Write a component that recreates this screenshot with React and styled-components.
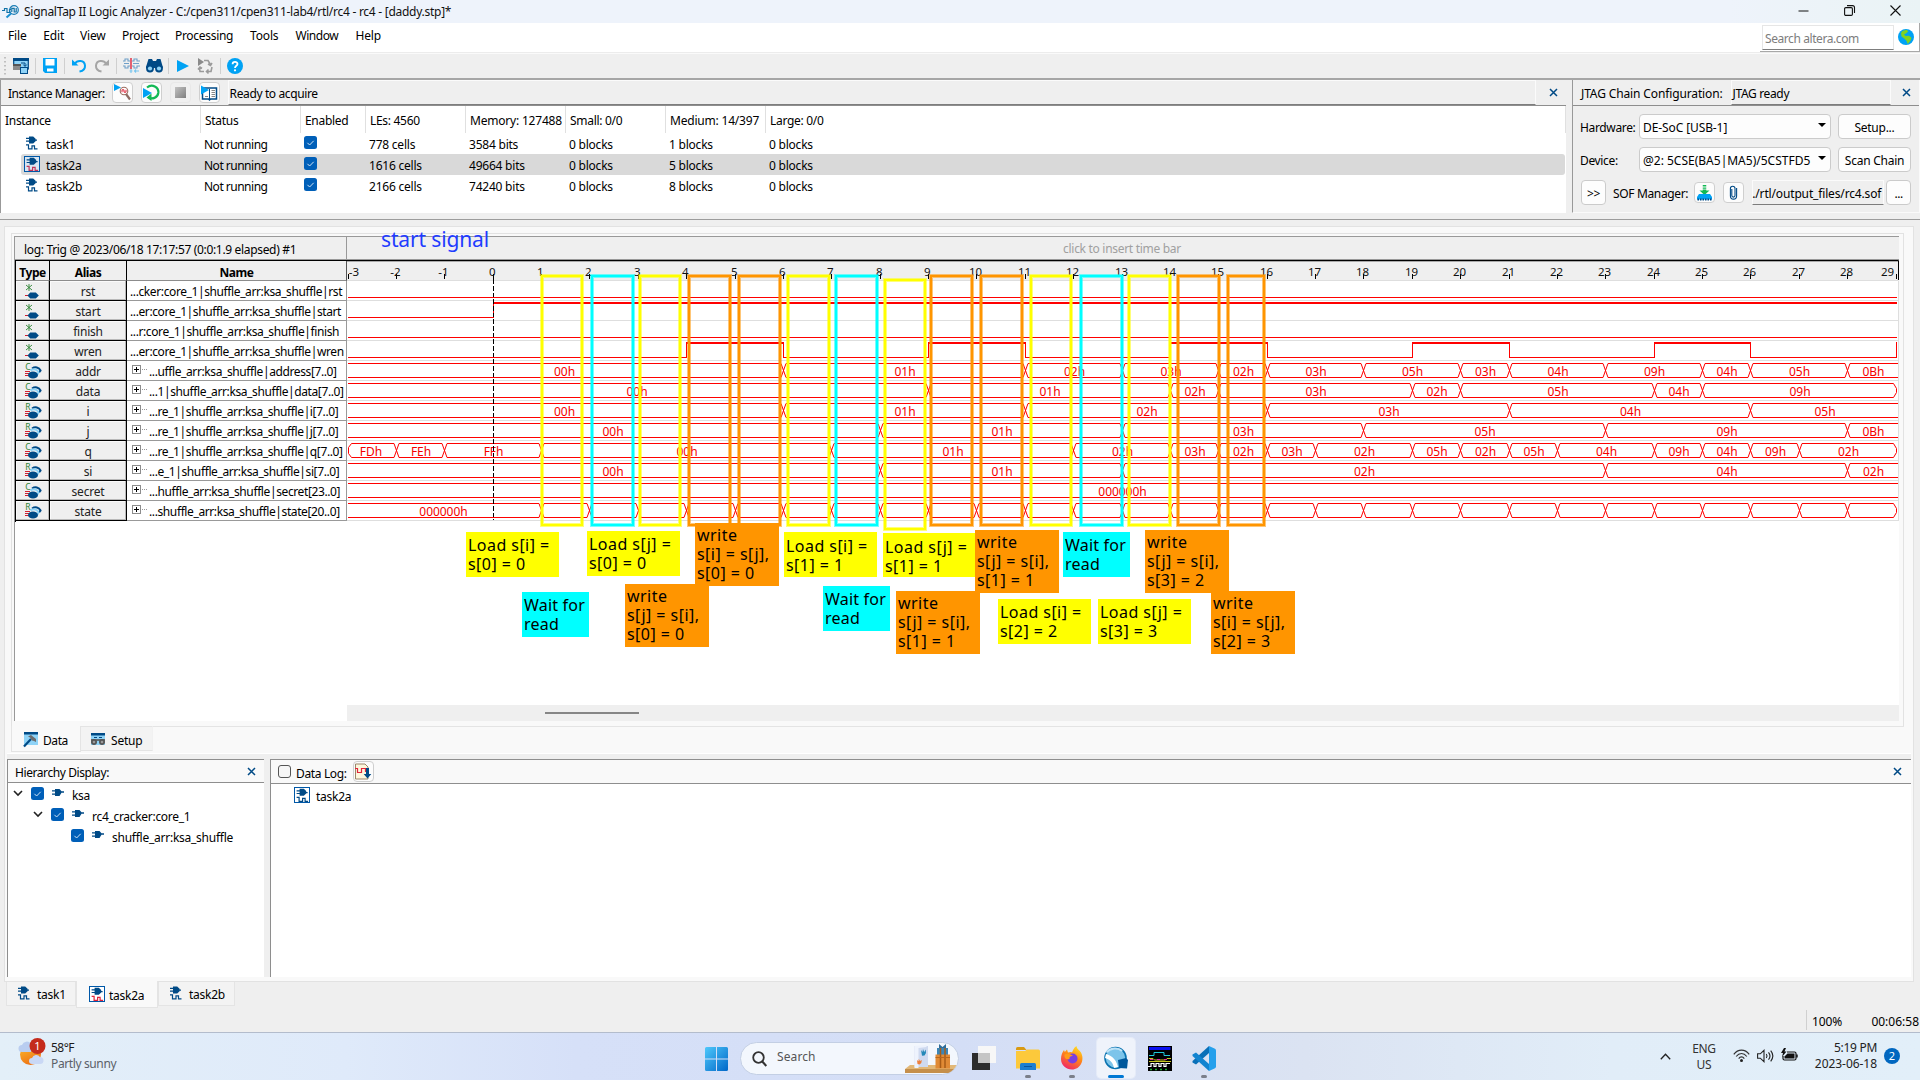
import React from 'react';
import styled, { createGlobalStyle } from 'styled-components';

const Global = createGlobalStyle`
  *, *::before, *::after { box-sizing: border-box; }
  html, body { margin: 0; padding: 0; background: #efefef; overflow: hidden; }
  svg { display: block; flex: none; overflow: visible; }
`;

const FONT = '"Noto Sans", "Open Sans", sans-serif';
const NAVY = '#004a86';
const SKY = '#00a2f4';

/* ---------- shell ---------- */
const Desktop = styled.div`
  position: relative;
  width: 1920px;
  height: 1080px;
  overflow: hidden;
  display: flex;
  flex-direction: column;
  background: #efefef;
  color: #000;
  font: 12px/16px ${FONT};
`;
const Text = styled.span`
  white-space: pre;
  letter-spacing: ${(p) => p.$ls ?? -0.35}px;
  color: ${(p) => p.$c || 'inherit'};
  margin-left: ${(p) => p.$ml || 0}px;
  margin-top: ${(p) => p.$mt || 0}px;
  flex: none;
`;
const Spacer = styled.div`flex: 1;`;

const TitleBar = styled.header`
  height: 23px;
  flex: none;
  display: flex;
  align-items: center;
  padding-left: 2px;
  background: linear-gradient(90deg, #eef3fb 0%, #eef3fb 90%, #eaf3f5 100%);
`;
const WindowButtons = styled.div`
  display: flex;
  align-items: center;
  gap: 35px;
  margin: -3px 19px 0 0;
`;
const MenuBar = styled.nav`
  height: 29px;
  flex: none;
  display: flex;
  background: #fff;
  padding-left: 8px;
`;
const MenuItem = styled.div`
  width: ${(p) => p.$w}px;
  padding-top: 5px;
  letter-spacing: ${(p) => p.$ls ?? -0.2}px;
`;
const SearchBox = styled.div`
  width: 160px;
  display: flex;
  align-items: flex-start;
  border-right: 1px solid #a8a8a8;
  border-bottom: 1px solid #a8a8a8;
  padding: 2px 0 0 2px;
  gap: 4px;
`;
const SearchField = styled.div`
  width: 132px;
  height: 25px;
  border: 1px solid #e6e6e6;
  border-bottom: 1px solid #7d7d7d;
  padding: 5px 0 0 2px;
`;
const ToolBar = styled.div`
  height: 28px;
  flex: none;
  display: flex;
  align-items: center;
  padding: 0 0 0 4px;
  border-top: 1px solid #ececec;
  border-bottom: 2px solid #a6a6a6;
  box-shadow: inset 0 1px 0 #fafafa;
`;
const ToolIcon = styled.div`
  margin-left: ${(p) => p.$gap}px;
  width: ${(p) => p.$w || 16}px;
  display: flex;
`;
const ToolSep = styled.div`
  width: 1px;
  height: 16px;
  margin-left: ${(p) => p.$gap}px;
  background: #cfcfcf;
`;

/* ---------- top docks ---------- */
const Docks = styled.section`
  height: 134px;
  flex: none;
  display: flex;
  gap: 6px;
  padding-bottom: 1px;
`;
const InstancePanel = styled.div`
  width: 1566px;
  display: flex;
  flex-direction: column;
  background: #fff;
  border-left: 1px solid #999;
`;
const JtagPanel = styled.div`
  flex: 1;
  display: flex;
  flex-direction: column;
  border-left: 1px solid #999;
  border-right: 1px solid #fafafa;
  border-bottom: 1px solid #fafafa;
`;
const DockHeader = styled.div`
  height: 26px;
  flex: none;
  display: flex;
  align-items: flex-start;
  background: #efefef;
  border-bottom: 1px solid #8e8e8e;
  padding-left: 7px;
`;
const IconButton = styled.div`
  width: 21px;
  height: 21px;
  margin: ${(p) => p.$mt ?? 2}px 0 0 ${(p) => p.$ml || 0}px;
  flex: none;
  display: flex;
  align-items: center;
  justify-content: center;
  background: ${(p) => (p.$off ? '#f0f0f0' : '#fcfcfc')};
  border: 1px solid ${(p) => (p.$off ? '#e8e8e8' : '#cfcfcf')};
  border-radius: 4px;
`;
const StatusField = styled.div`
  width: ${(p) => p.$w}px;
  height: ${(p) => p.$h || 25}px;
  margin-left: ${(p) => p.$ml}px;
  padding: ${(p) => p.$pt ?? 5}px 0 0 1px;
  border-top: 1px solid #fbfbfb;
  border-left: 1px solid #fbfbfb;
  border-right: 1px solid #fbfbfb;
  border-bottom: 1px solid #7d7d7d;
  white-space: nowrap;
`;
const CloseBox = styled.div`
  margin: ${(p) => p.$mt ?? 8}px ${(p) => p.$mr || 0}px 0 auto;
`;

const INST_COLS = '200px 100px 65px 100px 100px 100px 100px 800px';
const InstHead = styled.div`
  display: grid;
  grid-template-columns: ${INST_COLS};
  height: 27px;
`;
const InstHeadCell = styled.div`
  border-right: 1px solid #e0e0e0;
  padding: 7px 0 0 4px;
  letter-spacing: ${(p) => p.$ls ?? -0.3}px;
  white-space: nowrap;
`;
const InstRow = styled.div`
  display: grid;
  grid-template-columns: 179px 100px 65px 100px 100px 100px 100px 1fr;
  height: 21px;
  margin: 0 1px 0 20px;
  border-radius: 3px;
  background: ${(p) => (p.$on ? '#d9d9d9' : 'transparent')};
`;
const InstCell = styled.div`
  padding: ${(p) => (p.$icon ? 3 : 4)}px 0 0 ${(p) => (p.$first ? 3 : 4)}px;
  letter-spacing: -0.22px;
  white-space: nowrap;
  display: flex;
  gap: 6px;
`;

const JtagBody = styled.div`
  display: flex;
  flex-direction: column;
  gap: 8px;
  padding: 8px 7px 0 7px;
`;
const JtagRow = styled.div`
  height: 25px;
  display: flex;
  align-items: center;
`;
const JtagLabel = styled.div`
  width: 59px;
  padding-top: 2px;
  letter-spacing: -0.35px;
`;
const Select = styled.div`
  width: 192px;
  height: 25px;
  border: 1px solid #cbcbcb;
  border-radius: 4px;
  background: #fdfdfd;
  display: flex;
  align-items: center;
  padding: 2px 4px 0 3px;
  justify-content: space-between;
`;
const Arrow = styled.i`
  border: 4px solid transparent;
  border-top-color: #000;
  border-bottom: 0;
  margin-top: -5px;
`;
const PushButton = styled.div`
  width: ${(p) => p.$w}px;
  height: 25px;
  margin-left: ${(p) => p.$ml || 0}px;
  flex: none;
  display: flex;
  align-items: center;
  justify-content: center;
  padding-top: 2px;
  border: 1px solid #cbcbcb;
  border-radius: 4px;
  background: #fdfdfd;
`;

/* ---------- workspace ---------- */
const Divider = styled.div`
  height: 6px;
  flex: none;
  border-bottom: 1px solid #9c9c9c;
`;
const Workspace = styled.main`
  width: 1910px;
  height: 756px;
  flex: none;
  margin: 6px 0 0 4px;
  border: 1px solid #e2e2e2;
  background: #f9f9f9;
  display: flex;
  flex-direction: column;
`;
const LogPage = styled.div`
  width: 1893px;
  height: 493px;
  flex: none;
  margin: 6px 0 0 6px;
  border: 1px solid #e2e2e2;
  border-bottom: 0;
  background: #f9f9f9;
  padding: 2px 0 0 2px;
`;
const LogView = styled.div`
  width: 1885px;
  height: 485px;
  background: #fff;
  border-top: 1px solid #999;
  border-left: 1px solid #999;
  display: flex;
  flex-direction: column;
`;
const LogBar = styled.div`
  height: 23px;
  flex: none;
  display: flex;
  background: #efefef;
  border-bottom: 1px solid #999;
`;
const LogTitle = styled.div`
  width: 332px;
  border-right: 1px solid #999;
  padding: 5px 0 0 9px;
`;
const TimeBar = styled.div`
  flex: 1;
  padding: 4px 2px 0 0;
  text-align: center;
`;
const LogBody = styled.div`
  display: flex;
  height: 262px;
`;
const SignalTable = styled.div`
  width: 332px;
  flex: none;
  border-left: 1px solid #000;
  border-top: 1px solid #000;
  box-shadow: inset 0 1px 0 #999;
`;
const SignalRow = styled.div`
  display: grid;
  grid-template-columns: 34px 77px 1fr;
  height: 20px;
`;
const HeadCell = styled.div`
  background: #efefef;
  border-right: 1px solid ${(p) => (p.$last ? '#555' : '#000')};
  border-bottom: 1px solid #8c8c8c;
  padding-top: 4px;
  text-align: center;
  font-weight: 700;
  letter-spacing: -0.45px;
  font-size: 12px;
  line-height: 15px;
`;
const KeyCell = styled.div`
  background: #efefef;
  border-right: 1px solid #000;
  border-bottom: 1px solid #000;
  box-shadow: inset -1px -1px 0 #b8b8b8, inset 1px 1px 0 #fafafa;
  display: flex;
  justify-content: center;
  padding-top: 3px;
  line-height: 16px;
  color: #222;
  letter-spacing: -0.2px;
`;
const NameCell = styled.div`
  border-right: 1px solid #999;
  border-bottom: 1px solid #999;
  padding: 3px 0 0 ${(p) => (p.$bus ? 5 : 3)}px;
  display: flex;
  white-space: nowrap;
  letter-spacing: -0.39px;
`;
const Expander = styled.span`
  display: flex;
  margin: 1px 2px 0 0;
`;
const ScrollTrack = styled.div`
  height: 16px;
  margin: auto 0 0 332px;
  background: #efefef;
  padding: 7px 0 0 198px;
`;
const ScrollThumb = styled.div`
  width: 94px;
  height: 2px;
  background: #868686;
`;
const PageTabs = styled.div`
  height: 27px;
  flex: none;
  display: flex;
  align-items: flex-start;
  margin-left: 6px;
`;
const PageTab = styled.div`
  display: flex;
  width: ${(p) => p.$w}px;
  height: ${(p) => (p.$on ? 26 : 25)}px;
  padding: ${(p) => p.$pt}px 0 0 ${(p) => p.$pl}px;
  gap: ${(p) => p.$gap}px;
  background: ${(p) => (p.$on ? '#f9f9f9' : '#f3f3f3')};
  border: 1px solid #e4e4e4;
  border-top: ${(p) => (p.$on ? '0' : '1px solid #e4e4e4')};
  border-left: ${(p) => (p.$on ? '1px solid #e4e4e4' : '0')};
  border-right-color: ${(p) => (p.$on ? '#e4e4e4' : '#f1f1f1')};
`;
const TabRule = styled.div`
  width: 1751px;
  height: 1px;
  background: #e4e4e4;
`;
const LowerDocks = styled.div`
  flex: none;
  height: 224px;
  margin: 0 0 0 2px;
  padding-top: 5px;
  width: 1904px;
  background: #efefef;
  border-top: 1px solid #fff;
  display: flex;
  gap: 6px;
`;
const LowerPanel = styled.div`
  width: ${(p) => (p.$w ? p.$w + 'px' : 'auto')};
  flex: ${(p) => (p.$w ? 'none' : 1)};
  display: flex;
  flex-direction: column;
  background: #fff;
  border-left: 1px solid #8e8e8e;
  border-top: 1px solid #8e8e8e;
`;
const LowerHeader = styled.div`
  height: ${(p) => p.$h}px;
  flex: none;
  display: flex;
  align-items: flex-start;
  background: #f9f9f9;
  border-bottom: 1px solid #8e8e8e;
  padding-left: 7px;
`;
const TreeRow = styled.div`
  height: 21px;
  display: flex;
  align-items: center;
  padding-left: ${(p) => p.$pl}px;
`;
const Slot = styled.div`
  width: ${(p) => p.$w}px;
  flex: none;
  margin-top: ${(p) => p.$mt || 0}px;
`;
const EmptyCheck = styled.div`
  width: 13px;
  height: 13px;
  margin-top: 5px;
  border: 1px solid #555;
  border-radius: 3px;
  background: #f6f6f6;
`;

/* ---------- footer ---------- */
const FileTabs = styled.div`
  height: 27px;
  flex: none;
  display: flex;
  align-items: flex-start;
  padding-left: 6px;
  margin-top: -1px;
`;
const FileTab = styled.div`
  display: flex;
  width: ${(p) => p.$w}px;
  height: ${(p) => (p.$on ? 27 : 24)}px;
  margin-top: ${(p) => (p.$on ? 0 : 1)}px;
  padding: ${(p) => p.$pt}px 0 0 ${(p) => p.$pl}px;
  gap: ${(p) => (p.$on ? 4 : 5)}px;
  background: ${(p) => (p.$on ? '#f9f9f9' : '#f3f3f3')};
  border: 1px solid #e4e4e4;
  border-top: 0;
`;
const StatusBar = styled.div`
  flex: 1;
  display: flex;
  justify-content: flex-end;
  padding-top: 2px;
`;
const StatusCell = styled.div`
  width: 114px;
  height: 20px;
  padding: 4px 1px 0 5px;
  border-left: 1px solid #d0d0d0;
  display: flex;
  justify-content: space-between;
`;
const TaskBar = styled.footer`
  height: 48px;
  flex: none;
  display: grid;
  grid-template-columns: 705px 1fr auto;
  border-top: 1px solid #b3bccc;
  background: linear-gradient(90deg, #e3eff8 0%, #dfeafa 18%, #d6e0f8 30%, #d4def6 50%, #dbe3f2 68%, #e1edf8 84%, #e2eff9 100%);
`;
const Weather = styled.div`
  display: flex;
  padding: 5px 0 0 17px;
  gap: 6px;
`;
const Stack = styled.div`
  display: flex;
  flex-direction: column;
  text-align: ${(p) => p.$align || 'left'};
  padding-top: ${(p) => p.$pt || 0}px;
`;
const AppRow = styled.div`
  display: flex;
  align-items: flex-start;
`;
const SearchPill = styled.div`
  width: 219px;
  height: 33px;
  margin: 9px 0 0 12px;
  border-radius: 17px;
  border: 1px solid #c3cfe4;
  background: #f3f7fd;
  display: flex;
  align-items: center;
  padding-left: 11px;
  overflow: hidden;
`;
const AppTile = styled.div`
  width: 38px;
  height: 40px;
  margin-left: ${(p) => p.$ml}px;
  margin-top: 5px;
  padding-top: 8px;
  border-radius: 4px;
  background: ${(p) => (p.$on ? 'rgba(255,255,255,.6)' : 'transparent')};
  box-shadow: ${(p) => (p.$on ? '0 0 0 1px rgba(255,255,255,.35)' : 'none')};
  display: flex;
  flex-direction: column;
  align-items: center;
  justify-content: space-between;
`;
const Running = styled.i`
  width: ${(p) => (p.$on ? 16 : 6)}px;
  height: 3px;
  border-radius: 2px;
  background: ${(p) => (p.$none ? 'transparent' : p.$on ? '#0078d4' : '#7b7f8a')};
`;
const Tray = styled.div`
  display: flex;
  align-items: flex-start;
  padding-right: 20px;
`;
const TrayIcon = styled.div`
  margin: ${(p) => p.$mt}px 0 0 ${(p) => p.$ml}px;
`;
const Count = styled.div`
  width: 16px;
  height: 16px;
  margin: 15px 0 0 7px;
  border-radius: 8px;
  background: #0067c0;
  color: #fff;
  font-size: 11px;
  line-height: 16px;
  text-align: center;
`;

/* ---------- annotations ---------- */
const Highlight = styled.div`
  position: absolute;
  left: ${(p) => p.$x}px;
  top: ${(p) => p.$y}px;
  width: ${(p) => p.$w}px;
  height: ${(p) => p.$h}px;
  border: 2px solid ${(p) => p.$c};
  box-shadow: 0 0 0 1px ${(p) => p.$c}88, inset 0 0 0 1px ${(p) => p.$c}88;
`;
const Note = styled.div`
  position: absolute;
  left: ${(p) => p.$x}px;
  top: ${(p) => p.$y}px;
  width: ${(p) => p.$w}px;
  height: ${(p) => p.$h}px;
  padding: ${(p) => p.$pt}px 0 0 2px;
  background: ${(p) => p.$c};
  font: 16px/19px ${FONT};
  letter-spacing: ${(p) => p.$ls ?? 0.4}px;
  white-space: pre;
`;
const StartNote = styled.div`
  position: absolute;
  left: 381px;
  top: 227px;
  color: #1f3cff;
  font: 21px/25px ${FONT};
  letter-spacing: -0.15px;
  white-space: pre;
`;

/* ---------- icons ---------- */
const Check = () => (
  <svg width="13" height="13" viewBox="0 0 13 13">
    <rect width="13" height="13" rx="2.5" fill="#005fb8" />
    <path d="M3.4 6.8 5.6 9l4.1-4.2" fill="none" stroke="#cfe3f5" strokeWidth="1" />
  </svg>
);
const Cross = () => (
  <svg width="9" height="9" viewBox="0 0 9 9"><path d="M1 1l7 7M8 1L1 8" stroke={NAVY} strokeWidth="1.5" /></svg>
);
const plugShape = 'M5 1h4.2l2.4 2.3v.9h1.4v1.2h-1.4v.4L9.2 8H5V6.3H2V5.1h3V3.6H2V2.4h3z';
const PlugWave = ({ boxed, wave = NAVY, bg = '#fff' }) => (
  <svg width="16" height="16" viewBox="0 0 16 16">
    {boxed && <rect x=".5" y=".5" width="15" height="15" fill={bg} stroke="#0058a8" />}
    <g transform={boxed ? 'translate(.6 .8)' : 'translate(0 -.6)'}>
      <path d={plugShape} fill={NAVY} />
      <path d="M2 9.500h2.500v4H8v-3h2.500v3h3" fill="none" stroke={wave} strokeWidth="1.200" />
    </g>
  </svg>
);
const Plug = () => (
  <svg width="14" height="10" viewBox="0 0 14 10">
    <path d="M4 1h4.500l2 2.200H13v1.600h-2.500L8.500 8H4V6.700H1V5.500h3V3.500H1V2.300h3z" fill={NAVY} />
  </svg>
);
const Chevron = () => (
  <svg width="10" height="7" viewBox="0 0 10 7"><path d="M1 1l4 4 4-4" fill="none" stroke="#222" strokeWidth="1.6" /></svg>
);
const TapLogo = () => (
  <svg width="17" height="14" viewBox="0 0 17 14">
    <path d="M0 5.500h2.500v-2h2.500v4h2.500v-3h1.500M9.800 7V3.300h2.400V7h2V3" fill="none" stroke="#1173a8" strokeWidth="1.200" />
    <circle cx="12" cy="5" r="4.300" fill="none" stroke="#1a7db5" strokeWidth="1.200" />
    <path d="M9 8.500L4.500 12.500" stroke="#1a8fd0" strokeWidth="2" />
  </svg>
);
const TbLayers = () => (
  <svg width="16" height="16" viewBox="0 0 16 16">
    <rect x=".7" y="1" width="14.600" height="10" fill="#8fd3f7" stroke={NAVY} strokeWidth="1.200" />
    <rect x="0" y="0" width="16" height="3" fill={NAVY} />
    <rect x="0" y="6" width="8" height="6" fill="#8a8a8a" /><rect x="0" y="6" width="8" height="2" fill="#555" />
    <rect x="7.500" y="9.500" width="7" height="6" fill="#8fd3f7" stroke={NAVY} />
    <path d="M8 5h4v3M10.300 6.500L12 8.500l1.800-2" fill="none" stroke={NAVY} />
  </svg>
);
const TbSave = () => (
  <svg width="14" height="15" viewBox="0 0 14 15">
    <path d="M0 0h14v15H2l-2-2z" fill={SKY} /><rect x="2.500" y="1" width="9" height="6.500" fill="#fff" /><rect x="4" y="10.500" width="6.500" height="3" fill="#fff" />
  </svg>
);
const TbUndo = ({ c, flip }) => (
  <svg width="15" height="15" viewBox="0 0 15 15">
    <g transform={flip ? 'matrix(-1 0 0 1 15 0)' : undefined}>
      <path d="M0 1.500v6h6.500z" fill={c} />
      <path d="M3 5.500C5 2 12.500 1.500 13 7.500 13.200 10.500 11 13 7.500 13.600" fill="none" stroke={c} strokeWidth="2" />
    </g>
  </svg>
);
const TbTrigger = () => (
  <svg width="17" height="16" viewBox="0 0 17 16">
    <path d="M0 3h2V1h3v2h2M0 8h2v2h3V8h2M9 3h2V1h3v2h3M9 8h2v2h3V8h3M1 5.500h5M10 5.500h6" fill="none" stroke="#6f9fc8" strokeWidth="1.100" />
    <path d="M8 0v11" stroke="#e0243a" strokeWidth="1.400" />
    <path d="M8 11v4M6.500 13h3M16 13h-4M13 11.500L11.500 13l1.500 1.500" fill="none" stroke="#79c5ee" strokeWidth="1.100" />
  </svg>
);
const TbBinoc = () => (
  <svg width="17" height="15" viewBox="0 0 17 15">
    <path d="M2.500 1h3.500l1 2h3l1-2h3.500l2.300 8v1H0V9z" fill={NAVY} />
    <circle cx="4" cy="10.500" r="3.900" fill={NAVY} /><circle cx="13" cy="10.500" r="3.900" fill={NAVY} />
    <circle cx="4" cy="10.500" r="2.100" fill="#8fd3f7" /><circle cx="13" cy="10.500" r="2.100" fill="#8fd3f7" />
  </svg>
);
const TbPlay = () => (<svg width="12" height="12" viewBox="0 0 12 12"><path d="M0 0l12 6-12 6z" fill={SKY} /></svg>);
const TbRecycle = () => (
  <svg width="17" height="16" viewBox="0 0 17 16">
    <path d="M1 0v8l6-4z" fill="#8a8a8a" />
    <path d="M7 2.500h4l2.500 4M15 5l-1.500 2.500L11 6M15 9l-1 4.500h-4M11.500 11.500L9.500 13.500l2 2M7 13.500H3L2.500 10M1 11.500L3 9l2 1.500" fill="none" stroke="#9a9a9a" strokeWidth="1.600" />
  </svg>
);
const TbHelp = () => (
  <svg width="16" height="16" viewBox="0 0 16 16">
    <circle cx="8" cy="8" r="8" fill={SKY} />
    <path d="M5.600 6.200C5.600 3.200 10.500 3.200 10.500 6 10.500 7.800 8 7.800 8 10" fill="none" stroke="#fff" strokeWidth="1.800" />
    <circle cx="8" cy="12.300" r="1.100" fill="#fff" />
  </svg>
);
const ImRun = () => (
  <svg width="17" height="17" viewBox="0 0 17 17">
    <circle cx="10" cy="7" r="3.800" fill="#fff" stroke="#9b6b5e" strokeWidth="1.100" />
    <path d="M8 8.300V5.800h2v2.400h2V5.800" fill="none" stroke="#e0243a" strokeWidth="1" />
    <path d="M12 10l4 5.500" stroke="#8d6b63" strokeWidth="2.200" />
    <path d="M0 0l7 3.500L0 7z" fill={SKY} />
  </svg>
);
const ImLoop = () => (
  <svg width="17" height="17" viewBox="0 0 17 17">
    <path d="M4 3.500C9-.5 16 3 15.300 9 14.500 14 9 15.500 6 13.500" fill="none" stroke="#12b955" strokeWidth="2.200" />
    <path d="M8.500 9.500l-5 4 5 3.500z" fill="#12b955" />
    <path d="M0 4l9 5-9 5z" fill={SKY} />
  </svg>
);
const ImStop = () => (
  <svg width="13" height="13" viewBox="0 0 13 13">
    <defs><linearGradient id="stopg" x1="0" y1="0" x2="1" y2="1"><stop offset="0" stopColor="#c2c2c2" /><stop offset="1" stopColor="#7e7e7e" /></linearGradient></defs>
    <rect x="1" y="1" width="11" height="11" fill="url(#stopg)" />
  </svg>
);
const ImBook = () => (
  <svg width="17" height="16" viewBox="0 0 17 16">
    <path d="M2 3h13.500v11H9.500l-1 1-1-1H1.500V8" fill="#fff" stroke={NAVY} strokeWidth="1.500" />
    <path d="M8.500 4v10" stroke={NAVY} /><path d="M10.500 5.500h3.500M10.500 7.500h3.500M10.500 9.500h3.500M10.500 11.500h3.500M4 11.500h3" stroke="#888" />
    <path d="M0 .5l8 4.500-8 4.500z" fill={SKY} />
  </svg>
);
const ChipIcon = () => (
  <svg width="17" height="17" viewBox="0 0 17 17">
    <path d="M8.500 1v1.500M8.500 3.500v1.200M8.500 5.500v2" stroke="#12b955" strokeWidth="3.500" />
    <path d="M3.500 6.500h10l-5 4.500z" fill="#12b955" />
    <path d="M3 10h11l2 3v2.500H1V13z" fill={SKY} /><path d="M1.500 15.500h14" stroke={NAVY} strokeWidth="2" strokeDasharray="1.500 1" />
  </svg>
);
const ClipIcon = () => (
  <svg width="9" height="15" viewBox="0 0 9 15">
    <path d="M2.800 4v6.500a1.600 1.600 0 0 0 3.200 0V3.500a2 2 0 0 0-4.600 0v7.500a3.100 3.100 0 0 0 6.200 0V3" fill="none" stroke={NAVY} strokeWidth="1.100" />
  </svg>
);
const Globe = () => (
  <svg width="16" height="16" viewBox="0 0 16 16">
    <circle cx="8" cy="8" r="8" fill={SKY} />
    <path d="M4.500 2l4-1.300 1.800 1.500-2 2-2.300 1.400L7.500 7 11 6.800l2.500 2-1 3-2.700 3.300-1.500-3.500L6.200 9.400 3.500 7.500 3 4z" fill="#7fd321" />
  </svg>
);
const DataIcon = () => (
  <svg width="16" height="16" viewBox="0 0 16 16">
    <rect x="1" y="0" width="14" height="13" fill="#8fd3f7" /><rect x="1" y="0" width="14" height="2.500" fill={NAVY} />
    <path d="M1 14.500L8 7" stroke={NAVY} strokeWidth="2.200" /><path d="M5 4.500l3-1.500 5 4v3l-2-1-2-.5-2-3z" fill="#6d6d6d" />
  </svg>
);
const SetupIcon = () => (
  <svg width="16" height="13" viewBox="0 0 16 13">
    <rect x="1" y="0" width="14" height="12" fill="#8fd3f7" /><rect x="1" y="0" width="14" height="2.500" fill={NAVY} />
    <path d="M4 4.500h3M9 4.500h3" stroke={NAVY} /><path d="M1 7h14" stroke="#555" strokeWidth="1.600" />
    <circle cx="4" cy="9" r="3" fill="#555" /><circle cx="12" cy="9" r="3" fill="#555" /><circle cx="4" cy="9" r="1.300" fill="#999" /><circle cx="12" cy="9" r="1.300" fill="#999" />
  </svg>
);
const LogIcon = () => (
  <svg width="18" height="17" viewBox="0 0 18 17">
    <path d="M1.500 1h9.500l3 3v12h-12.500z" fill="#fdf6dc" stroke="#9a8568" />
    <path d="M1 5.500h2.500v4h4v-4h4v3.500" fill="none" stroke="#e0243a" strokeWidth="1.200" />
    <path d="M12 5h3v6h2.300l-3.800 4.500L9.700 11H12z" fill={NAVY} />
  </svg>
);
const NodeType = () => (
  <svg width="18" height="16" viewBox="0 0 18 16">
    <path d="M5 0v7M2 1l6 5M8 1L2 6" stroke="#2c8434" strokeWidth=".9" />
    <path d="M1 11.500h4" stroke="#d02030" /><path d="M3.500 11.500l2.700-3h5.600l3 3-3 3H6.200z" fill={NAVY} />
  </svg>
);
const BusType = ({ letter }) => (
  <svg width="18" height="16" viewBox="0 1 18 16">
    <path d="M1 8.500h5M1 10.500h4M1 12.500h5" stroke="#d02030" />
    <path d="M8 5.500c3-2 7-1.500 8.500 2l-1.500 2" fill="none" stroke={NAVY} strokeWidth="2" />
    <path d="M6.500 7.500c3-2 7-1.500 8 2l-1 2" fill="none" stroke="#8fd3f7" strokeWidth="2" />
    <ellipse cx="9" cy="12" rx="5" ry="3.600" fill={NAVY} />
    <text x="1.300" y="6.800" fontSize="8.500" fontFamily="Noto Sans" fill="#2c8434">{letter}</text>
  </svg>
);
const Plus = () => (
  <svg width="15" height="10" viewBox="0 0 15 10">
    <rect x=".5" y=".5" width="8" height="8" fill="#fff" stroke="#8c8c8c" /><path d="M2 4.500h5M4.500 2v5" stroke="#000" />
    <path d="M10 4.500h5" stroke="#999" strokeDasharray="1 1" />
  </svg>
);
const WinLogo = () => (
  <svg width="23" height="24" viewBox="0 0 23 24">
    <defs><linearGradient id="wg" x1="0" y1="0" x2="1" y2="1"><stop offset="0" stopColor="#4fc8fb" /><stop offset="1" stopColor="#0067c8" /></linearGradient></defs>
    <path d="M0 1.500Q0 0 1.500 0H11v11.500H0zM12 0h9.500Q23 0 23 1.500v10H12zM0 12.500h11V24H1.500Q0 24 0 22.500zM12 12.500h11v10Q23 24 21.500 24H12z" fill="url(#wg)" />
  </svg>
);
const Promo = () => (
  <svg width="53" height="29" viewBox="0 0 53 29">
    <path d="M5 21h48v4H0z" fill="#e2b878" /><path d="M0 25h53v4H0z" fill="#c58f4b" />
    <path d="M9.500 2h13.500v21H9.500z" fill="#cfdaf0" /><path d="M9.500 2l12-1v2l-8 1v20H9.500z" fill="#eef3fd" />
    <path d="M16 6l1.500 2 .5-3 1.200 3 1.500-2.500.3 3.500-1.500 2.500-2.500.2z" fill="#2489b8" />
    <path d="M12 16l1.500 1.200.3-2.500 1.200 2.300 1.800-1-.5 3-1.800 1.500-2-.5z" fill="#ee7f3c" />
    <path d="M32 4h11v7H32z" fill="#3a86b8" /><path d="M34 0l3.500 3L41 0v4h-7z" fill="#2f6d9a" /><path d="M30.500 10.500h14.500v14H30.500z" fill="#e08a35" /><path d="M35.500 4v20M40 4v20" stroke="#a75b17" strokeWidth="1.500" /><path d="M30.500 13.500h14.500" stroke="#b8661c" />
  </svg>
);
const TaskView = () => (
  <svg width="24" height="25" viewBox="0 0 24 25">
    <rect x="0" y="7" width="18" height="17" fill="#2c2c2c" /><rect x="6" y="0" width="18" height="17" fill="#f7f7f7" /><rect x="6" y="7" width="12" height="10" fill="#c5c5c5" />
  </svg>
);
const Folder = () => (
  <svg width="24" height="24" viewBox="0 0 24 24">
    <path d="M0 2.500Q0 1 1.500 1H8l2.500 3H0z" fill="#d99a12" /><path d="M0 5h9l2-1.500h11.500Q24 3.500 24 5v17.500H0z" fill="#fcc93b" />
    <path d="M4 18.500Q4 17 5.500 17h13q1.500 0 1.500 1.500V24H4z" fill="#1d7fd0" /><path d="M8 20.500h8" stroke="#0a559c" />
  </svg>
);
const Firefox = () => (
  <svg width="24" height="24" viewBox="0 0 24 24">
    <defs><linearGradient id="ff" x1=".8" y1="0" x2=".3" y2="1"><stop offset="0" stopColor="#ffe226" /><stop offset=".45" stopColor="#ff8a16" /><stop offset="1" stopColor="#f0246a" /></linearGradient></defs>
    <path d="M1 13C1 9 2.500 6 4 4l.8 2L7 3.500 8 6.500c2-1 4-.5 4 0 1-2.500 2-5 4.500-6.500.2 3 3 4 4.500 6.500 4 7.500-.5 17-9 17C6 23.500 1 19 1 13z" fill="url(#ff)" />
    <circle cx="12.500" cy="12.500" r="5" fill="#7a3fe0" /><path d="M4.500 8.500c3-1.500 6 0 8.500 1.200-3 .3-3.800 1.500-3.500 3.300C6 14 4 12 4.500 8.500z" fill="#ff9a1a" />
  </svg>
);
const Quartus = () => (
  <svg width="24" height="24" viewBox="0 0 24 24">
    <circle cx="11.500" cy="12" r="10.500" fill="#7cc4ea" stroke="#0a73b0" strokeWidth="1.600" />
    <path d="M2 8c4 1 10 4 12 13l-4 1C9 16 5 13 1 12z" fill="#fff" /><path d="M2.500 6.500C6 2 14 1 18 5" fill="none" stroke="#bfe3f7" strokeWidth="2" />
    <path d="M14 14l8-2 2 2-1 8.500-8-.5z" fill="#00589c" />
  </svg>
);
const WaveApp = () => (
  <svg width="24" height="25" viewBox="0 0 24 25">
    <rect width="24" height="25" fill="#000" /><rect x="1" y="1" width="21.500" height="3" fill="#0a10f0" />
    <path d="M1 9.500h5v-3h10v3h6" fill="none" stroke="#20c8d8" /><path d="M1 12.500h4l1.500 1.500h11l1.500-1.500h4M1 15.500h22" fill="none" stroke="#c8c820" /><path d="M2 13.500h20" stroke="#e030a0" strokeDasharray="3 4" />
    <path d="M0 20.500h3v-3h3v3h2v-3h3v3h2v-3h3v3h2v-3h4" fill="none" stroke="#fff" strokeWidth="1.200" /><path d="M2 23.500h20" stroke="#20b030" strokeWidth="1.600" strokeDasharray="2 3" />
  </svg>
);
const VsCode = () => (
  <svg width="24" height="25" viewBox="0 0 24 25">
    <path d="M17 0l6 2.800Q24 3.300 24 4.500v16q0 1.200-1 1.700L17 25z" fill="#25a0ec" />
    <path d="M17 0v7L4 18.500l-3.500-2v-1.500z" fill="#0a70b8" /><path d="M17 25v-7L4 6.500l-3.500 2V10z" fill="#1284d0" />
  </svg>
);
const WeatherIcon = () => (
  <svg width="28" height="28" viewBox="0 0 28 28">
    <defs><linearGradient id="sun" x1="0" y1="0" x2=".4" y2="1"><stop offset="0" stopColor="#fdc02f" /><stop offset="1" stopColor="#ee7414" /></linearGradient></defs>
    <circle cx="13.500" cy="16.500" r="10.500" fill="url(#sun)" />
    <path d="M5 14a3.500 3.500 0 0 1 0-7 5 5 0 0 1 9-1v8z" fill="#b9cdf0" />
    <path d="M15 26a3 3 0 0 1 0-6 4.500 4.500 0 0 1 8-1 3.500 3.500 0 0 1 0 7z" fill="#c9d8f5" />
    <circle cx="20.500" cy="8" r="8" fill="#c42b1c" />
    <text x="20.500" y="12" fontSize="11" fontFamily="Noto Sans" fill="#fff" textAnchor="middle">1</text>
  </svg>
);

/* ---------- waveform data ---------- */
const X0 = 348;
const STEP = 48.375;
const END = 1898;
const tx = (k) => Math.floor(X0 + STEP * (k + 3));

const N = 'node';
const SIGNALS = [
  { t: N, alias: 'rst', name: '...cker:core_1|shuffle_arr:ksa_shuffle|rst', high: [] },
  { t: N, alias: 'start', name: '...er:core_1|shuffle_arr:ksa_shuffle|start', high: [[0, 29]], rise: [0] },
  { t: N, alias: 'finish', name: '...r:core_1|shuffle_arr:ksa_shuffle|finish', high: [] },
  { t: N, alias: 'wren', name: '...er:core_1|shuffle_arr:ksa_shuffle|wren', high: [[4, 6], [9, 11], [14, 16], [19, 21], [24, 26]], rise: [4, 6, 9, 11, 14, 16, 19, 21, 24, 26, 29] },
  { t: 'C', alias: 'addr', name: '...uffle_arr:ksa_shuffle|address[7..0]', at: [6, 11, 13, 15, 16, 18, 20, 21, 23, 25, 26, 28], v: '00 01 02 03 02 03 05 03 04 09 04 05 0B' },
  { t: 'C', alias: 'data', name: '...1|shuffle_arr:ksa_shuffle|data[7..0]', at: [9, 14, 15, 19, 20, 24, 25, 29], v: '00 01 02 03 02 05 04 09' },
  { t: 'R', alias: 'i', name: '...re_1|shuffle_arr:ksa_shuffle|i[7..0]', at: [6, 11, 16, 21, 26], v: '00 01 02 03 04 05' },
  { t: 'R', alias: 'j', name: '...re_1|shuffle_arr:ksa_shuffle|j[7..0]', at: [8, 13, 18, 23, 28], v: '00 01 03 05 09 0B' },
  { t: 'C', alias: 'q', name: '...re_1|shuffle_arr:ksa_shuffle|q[7..0]', open: true, at: [-2, -1, 1, 7, 12, 14, 15, 16, 17, 19, 20, 21, 22, 24, 25, 26, 27, 29], v: 'FD FE FF 00 01 02 03 02 03 02 05 02 05 04 09 04 09 02' },
  { t: 'R', alias: 'si', name: '...e_1|shuffle_arr:ksa_shuffle|si[7..0]', at: [8, 13, 23, 28], v: '00 01 02 04 02' },
  { t: 'C', alias: 'secret', name: '...huffle_arr:ksa_shuffle|secret[23..0]', at: [], v: '000000' },
  { t: 'R', alias: 'state', name: '...shuffle_arr:ksa_shuffle|state[20..0]', at: Array.from({ length: 29 }, (_, n) => n + 1), v: '000000' },
];

function digitalPath(s, y) {
  const lo = y + 17.5;
  const out = [];
  let x = X0;
  s.high.forEach(([a, b]) => {
    out.push(`M${x} ${lo}H${tx(a)}`);
    x = tx(b);
  });
  if (x < 1890) out.push(`M${x} ${lo}H1897`);
  (s.rise || []).forEach((k) => out.push(`M${tx(k) + 0.5} ${y + 2}V${y + 18}`));
  return out.join('');
}

function busPath(s, y) {
  const t = y + 3.5;
  const b = y + 17.5;
  const m = y + 10.5;
  let out = '';
  let x = s.open ? X0 + 3.5 : X0;
  if (s.open) out += `M${X0 + 3.5} ${t}L${X0 + 0.5} ${m - 3}V${m + 3}L${X0 + 3.5} ${b}`;
  s.at.forEach((k) => {
    const c = tx(k) + 0.5;
    if (k < 29) {
      out += `M${x} ${t}H${c - 2.5}L${c + 2.5} ${b}M${x} ${b}H${c - 2.5}L${c + 2.5} ${t}`;
    } else {
      out += `M${x} ${t}H${c - 3}L${c} ${m - 2}V${m + 2}L${c - 3} ${b}H${x}`;
    }
    x = c + 2.5;
  });
  if (x < 1890) out += `M${x} ${t}H${END}M${x} ${b}H${END}`;
  return out;
}

function Wave() {
  return (
    <svg width="1552" height="262" viewBox="347 260 1552 262" fontFamily='"Noto Sans", sans-serif' fontSize="12">
      <rect x="347" y="260" width="1552" height="20" fill="#efefef" />
      <path d="M347 260.5H1898.5V280" fill="none" stroke="#000" />
      <path d="M347 261.5H1898" stroke="#aaa" />
      {Array.from({ length: 13 }, (_, r) => (
        <path key={r} d={`M347 ${280.5 + r * 20}H1898.5`} stroke="#dedede" />
      ))}
      <path d="M1898.5 281V521" stroke="#dedede" />
      {Array.from({ length: 33 }, (_, n) => {
        const k = n - 3;
        const x = tx(k);
        const cx = k === -3 ? 354 : k === 29 ? 1887.5 : x - (k >= 10 || k < 0 ? 0.5 : 0.8);
        return (
          <g key={k}>
            <path d={`M${x + 0.5} 274V279`} stroke="#000" shapeRendering="crispEdges" />
            <text x={cx} y="275.500" fontSize="11.500" textAnchor="middle" fill="#111">{k}</text>
          </g>
        );
      })}
      {SIGNALS.map((s, r) => {
        const y = 280 + r * 20;
        if (s.t === N) {
          return (
            <g key={r}>
              <path d={digitalPath(s, y)} fill="none" stroke="#f00" />
              {s.high.map(([a, b]) => <path key={a} d={`M${tx(a)} ${y + 3}H${b === 29 ? 1897 : tx(b) + 1}`} stroke="#f00" strokeWidth="2" />)}
            </g>
          );
        }
        const edges = [s.open || s.at.length ? X0 - 1 : X0, ...s.at.map(tx), END];
        return (
          <g key={r}>
            <path d={busPath(s, y)} fill="none" stroke="#f00" />
            {s.v.split(' ').map((v, n) => (
              <text key={n} x={(edges[n] + edges[n + 1]) / 2 + (n ? 1 : -0.5)} y={y + 16} textAnchor="middle" fill="#f40000" letterSpacing="-.05">{v}h</text>
            ))}
          </g>
        );
      })}
      <path d="M493.500 279V520" stroke="#000" strokeDasharray="5 2 5 2 4 2" />
    </svg>
  );
}

const Y = '#ffff00';
const C = '#00ffff';
const O = '#ff9500';
const HIGHLIGHTS = [
  [541, 42, Y], [591, 43, C], [639, 42, Y], [688, 43, O], [738, 43, O], [787, 43, Y], [835, 43, C],
  [884, 42, Y, 279, 251], [930, 43, O], [980, 43, O], [1030, 42, Y], [1080, 43, C], [1128, 43, Y], [1177, 43, O], [1227, 38, O],
];
const NOTES = [
  [466, 532, 93, 45, Y, 'Load s[i] =\ns[0] = 0', 3],
  [522, 592, 67, 45, C, 'Wait for\nread', 3],
  [587, 531, 93, 45, Y, 'Load s[j] =\ns[0] = 0', 3],
  [625, 584, 84, 63, O, 'write\ns[j] = s[i],\ns[0] = 0', 2],
  [695, 523, 84, 63, O, 'write\ns[i] = s[j],\ns[0] = 0', 2],
  [784, 532, 93, 45, Y, 'Load s[i] =\ns[1] = 1', 4],
  [823, 586, 67, 45, C, 'Wait for\nread', 3],
  [883, 533, 93, 44, Y, 'Load s[j] =\ns[1] = 1', 4],
  [896, 591, 84, 63, O, 'write\ns[j] = s[i],\ns[1] = 1', 2],
  [975, 530, 84, 63, O, 'write\ns[j] = s[i],\ns[1] = 1', 2],
  [998, 599, 93, 45, Y, 'Load s[i] =\ns[2] = 2', 3],
  [1063, 532, 67, 45, C, 'Wait for\nread', 3],
  [1098, 599, 93, 45, Y, 'Load s[j] =\ns[3] = 3', 3],
  [1145, 530, 84, 63, O, 'write\ns[j] = s[i],\ns[3] = 2', 2],
  [1211, 591, 84, 63, O, 'write\ns[i] = s[j],\ns[2] = 3', 2],
];
const INSTANCES = [
  ['task1', '778 cells', '3584 bits', '1 blocks'],
  ['task2a', '1616 cells', '49664 bits', '5 blocks'],
  ['task2b', '2166 cells', '74240 bits', '8 blocks'],
];

export default function App() {
  return (
    <Desktop>
      <Global />
      <TitleBar>
        <TapLogo />
        <Text $ml={5} $ls={-0.27} $c="#111">SignalTap II Logic Analyzer - C:/cpen311/cpen311-lab4/rtl/rc4 - rc4 - [daddy.stp]*</Text>
        <Spacer />
        <WindowButtons>
          <svg width="11" height="11" viewBox="0 0 11 11"><path d="M.5 6h10" stroke="#111" /></svg>
          <svg width="11" height="11" viewBox="0 0 11 11"><rect x=".6" y="2.600" width="7.800" height="7.800" rx="1.200" fill="none" stroke="#111" strokeWidth="1.100" /><path d="M3 .6h5.500q2 0 2 2V8" fill="none" stroke="#111" strokeWidth="1.100" /></svg>
          <svg width="11" height="11" viewBox="0 0 11 11"><path d="M.5.5l10 10M10.500.5l-10 10" stroke="#111" strokeWidth="1.100" /></svg>
        </WindowButtons>
      </TitleBar>
      <MenuBar>
        {[['File', 35.300], ['Edit', 36.700], ['View', 42], ['Project', 53], ['Processing', 75], ['Tools', 45.500], ['Window', 60], ['Help', 40]].map(([m, w]) => (
          <MenuItem key={m} $w={w} $ls={m === 'Processing' ? -0.3 : m === 'Window' ? -0.45 : m === 'Project' ? -0.3 : -0.15}>{m}</MenuItem>
        ))}
        <Spacer />
        <SearchBox>
          <SearchField><Text $ls={-0.42} $c="#7d7d7d">Search altera.com</Text></SearchField>
          <Slot $w={16} $mt={4}><Globe /></Slot>
        </SearchBox>
      </MenuBar>
      <ToolBar>
        <svg width="3" height="18" viewBox="0 0 3 18"><path d="M1 0v18" stroke="#b5b5b5" strokeWidth="1.600" strokeDasharray="1.500 2.500" /></svg>
        <ToolIcon $gap={6}><TbLayers /></ToolIcon>
        <ToolSep $gap={6} />
        <ToolIcon $gap={7} $w={14}><TbSave /></ToolIcon>
        <ToolSep $gap={7} />
        <ToolIcon $gap={7} $w={15}><TbUndo c={SKY} /></ToolIcon>
        <ToolIcon $gap={7} $w={15}><TbUndo c="#a5a5a5" flip /></ToolIcon>
        <ToolSep $gap={7} />
        <ToolIcon $gap={6} $w={17}><TbTrigger /></ToolIcon>
        <ToolIcon $gap={6} $w={17}><TbBinoc /></ToolIcon>
        <ToolSep $gap={5} />
        <ToolIcon $gap={8} $w={12}><TbPlay /></ToolIcon>
        <ToolIcon $gap={8} $w={17}><TbRecycle /></ToolIcon>
        <ToolSep $gap={6} />
        <ToolIcon $gap={6}><TbHelp /></ToolIcon>
      </ToolBar>

      <Docks>
        <InstancePanel>
          <DockHeader>
            <Text $mt={6} $ls={-0.52}>Instance Manager:</Text>
            <IconButton $ml={7}><ImRun /></IconButton>
            <IconButton $ml={8}><ImLoop /></IconButton>
            <IconButton $ml={8} $off><ImStop /></IconButton>
            <IconButton $ml={8}><ImBook /></IconButton>
            <StatusField $w={1308} $ml={8}><Text $ls={-0.38}>Ready to acquire</Text></StatusField>
            <CloseBox $mr={8}><Cross /></CloseBox>
          </DockHeader>
          <InstHead>
            {['Instance', 'Status', 'Enabled', 'LEs: 4560', 'Memory: 127488', 'Small: 0/0', 'Medium: 14/397', 'Large: 0/0'].map((h) => (
              <InstHeadCell key={h} $ls={/Med|Mem/.test(h) ? -0.2 : -0.3}>{h}</InstHeadCell>
            ))}
          </InstHead>
          {INSTANCES.map(([n, le, mem, med], i) => (
            <InstRow key={n} $on={i === 1}>
              <InstCell $first>
                <Slot $w={16} $mt={i === 1 ? -2 : -1}><PlugWave boxed={i === 1} wave={i === 1 ? '#c2365a' : NAVY} bg="#d9e6f2" /></Slot>
                <span>{n}</span>
              </InstCell>
              <InstCell><Text $ls={-0.5}>Not running</Text></InstCell>
              <InstCell $icon><Check /></InstCell>
              <InstCell>{le}</InstCell>
              <InstCell>{mem}</InstCell>
              <InstCell>0 blocks</InstCell>
              <InstCell>{med}</InstCell>
              <InstCell>0 blocks</InstCell>
            </InstRow>
          ))}
        </InstancePanel>
        <JtagPanel>
          <DockHeader>
            <Text $mt={6} $ml={1} $ls={-0.13}>JTAG Chain Configuration:</Text>
            <StatusField $w={160} $ml={8}><Text>JTAG ready</Text></StatusField>
            <CloseBox $mr={8}><Cross /></CloseBox>
          </DockHeader>
          <JtagBody>
            <JtagRow>
              <JtagLabel>Hardware:</JtagLabel>
              <Select><Text $ls={-0.1}>DE-SoC [USB-1]</Text><Arrow /></Select>
              <PushButton $ml={7} $w={73}><Text $ls={-0.25}>Setup...</Text></PushButton>
            </JtagRow>
            <JtagRow>
              <JtagLabel>Device:</JtagLabel>
              <Select><Text $ls={0}>@2: 5CSE(BA5|MA5)/5CSTFD5</Text><Arrow /></Select>
              <PushButton $ml={7} $w={73}><Text $ls={-0.25}>Scan Chain</Text></PushButton>
            </JtagRow>
            <JtagRow>
              <PushButton $ml={1} $w={25}><Text>&gt;&gt;</Text></PushButton>
              <Text $ml={7} $mt={2} $ls={-0.35}>SOF Manager:</Text>
              <IconButton $ml={6} $mt={-1}><ChipIcon /></IconButton>
              <IconButton $ml={8} $mt={-1}><ClipIcon /></IconButton>
              <StatusField $w={132} $h={25} $ml={8} $pt={5}><Text $ml={-2} $ls={-0.15}>./rtl/output_files/rc4.sof</Text></StatusField>
              <PushButton $ml={2} $w={25}><Text>...</Text></PushButton>
            </JtagRow>
          </JtagBody>
        </JtagPanel>
      </Docks>
      <Divider />

      <Workspace>
        <LogPage>
          <LogView>
            <LogBar>
              <LogTitle><Text $ls={-0.33}>log: Trig @ 2023/06/18 17:17:57 (0:0:1.9 elapsed) #1</Text></LogTitle>
              <TimeBar><Text $ls={-0.3} $c="#a0a0a0">click to insert time bar</Text></TimeBar>
            </LogBar>
            <LogBody>
              <SignalTable>
                <SignalRow>
                  <HeadCell>Type</HeadCell>
                  <HeadCell>Alias</HeadCell>
                  <HeadCell $last>Name</HeadCell>
                </SignalRow>
                {SIGNALS.map((s) => (
                  <SignalRow key={s.alias}>
                    <KeyCell>{s.t === N ? <NodeType /> : <BusType letter={s.t} />}</KeyCell>
                    <KeyCell>{s.alias}</KeyCell>
                    <NameCell $bus={s.t !== N}>
                      {s.t !== N && <Expander><Plus /></Expander>}
                      {s.name}
                    </NameCell>
                  </SignalRow>
                ))}
              </SignalTable>
              <Wave />
            </LogBody>
            <ScrollTrack><ScrollThumb /></ScrollTrack>
          </LogView>
        </LogPage>
        <PageTabs>
          <PageTab $on $w={70} $pl={11} $pt={6} $gap={4}><DataIcon /><Text $mt={1} $ls={-0.4}>Data</Text></PageTab>
          <PageTab $w={72} $pl={9} $pt={6} $gap={5}><SetupIcon /><Text $ls={-0.2}>Setup</Text></PageTab>
          <TabRule />
        </PageTabs>
        <LowerDocks>
          <LowerPanel $w={257}>
            <LowerHeader $h={23}>
              <Text $mt={5} $ls={-0.42}>Hierarchy Display:</Text>
              <CloseBox $mr={8} $mt={7}><Cross /></CloseBox>
            </LowerHeader>
            <TreeRow $pl={5}><Slot $w={18} $mt={-1}><Chevron /></Slot><Slot $w={20}><Check /></Slot><Slot $w={21} $mt={-2}><Plug /></Slot><Text $mt={4} $ls={-0.3}>ksa</Text></TreeRow>
            <TreeRow $pl={25}><Slot $w={18} $mt={-1}><Chevron /></Slot><Slot $w={20}><Check /></Slot><Slot $w={21} $mt={-2}><Plug /></Slot><Text $mt={4} $ls={-0.3}>rc4_cracker:core_1</Text></TreeRow>
            <TreeRow $pl={63}><Slot $w={20}><Check /></Slot><Slot $w={21} $mt={-2}><Plug /></Slot><Text $mt={4} $ls={-0.25}>shuffle_arr:ksa_shuffle</Text></TreeRow>
          </LowerPanel>
          <LowerPanel>
            <LowerHeader $h={24}>
              <EmptyCheck />
              <Text $ml={5} $mt={6} $ls={-0.35}>Data Log:</Text>
              <IconButton $ml={6} $mt={1}><LogIcon /></IconButton>
              <CloseBox $mr={9} $mt={7}><Cross /></CloseBox>
            </LowerHeader>
            <TreeRow $pl={23}><Slot $w={22}><PlugWave boxed /></Slot><Text $mt={4} $ls={-0.25}>task2a</Text></TreeRow>
          </LowerPanel>
        </LowerDocks>
      </Workspace>

      <FileTabs>
        <FileTab $w={70} $pl={9} $pt={4}><PlugWave /><Text $mt={1} $ls={-0.25}>task1</Text></FileTab>
        <FileTab $on $w={82} $pl={12} $pt={5}><PlugWave boxed wave="#e0243a" /><Text $mt={2} $ls={-0.25}>task2a</Text></FileTab>
        <FileTab $w={77} $pl={9} $pt={4}><PlugWave /><Text $mt={1} $ls={-0.25}>task2b</Text></FileTab>
      </FileTabs>
      <StatusBar>
        <StatusCell><Text $ls={-0.1}>100%</Text><Text $ls={0}>00:06:58</Text></StatusCell>
      </StatusBar>

      <TaskBar>
        <Weather>
          <WeatherIcon />
          <Stack $pt={2}><Text $ls={-0.5} $c="#1b1b1b">58°F</Text><Text $ls={-0.38} $c="#5b6068">Partly sunny</Text></Stack>
        </Weather>
        <AppRow>
          <Slot $w={23} $mt={14}><WinLogo /></Slot>
          <SearchPill>
            <svg width="15" height="16" viewBox="0 0 15 16"><circle cx="6.500" cy="6.500" r="5.300" fill="none" stroke="#333" strokeWidth="1.800" /><path d="M10.300 10.500l4 4.500" stroke="#333" strokeWidth="2" /></svg>
            <Text $ml={10} $mt={-3} $ls={0.1} $c="#555">Search</Text>
            <Spacer />
            <Promo />
          </SearchPill>
          <AppTile $ml={6}><TaskView /><Running $none /></AppTile>
          <AppTile $ml={6}><Folder /><Running /></AppTile>
          <AppTile $ml={6}><Firefox /><Running /></AppTile>
          <AppTile $ml={6} $on><Quartus /><Running $on /></AppTile>
          <AppTile $ml={6}><WaveApp /><Running $none /></AppTile>
          <AppTile $ml={6}><VsCode /><Running /></AppTile>
        </AppRow>
        <Tray>
          <TrayIcon $mt={20} $ml={0}><svg width="11" height="7" viewBox="0 0 11 7"><path d="M.8 6.200l4.700-5 4.700 5" fill="none" stroke="#222" strokeWidth="1.300" /></svg></TrayIcon>
          <Slot $w={66}><Stack $pt={8} $align="center"><Text $ls={-0.4} $c="#333">ENG</Text><Text $ls={-0.3} $c="#333">US</Text></Stack></Slot>
          <TrayIcon $mt={16} $ml={-4}>
            <svg width="17" height="14" viewBox="0 0 17 14"><path d="M.8 5.300C5-.2 12-.2 16.200 5.300M3.200 7.500c3-4 7.600-4 10.600 0M5.700 9.600c1.600-2.200 4-2.200 5.600 0" fill="none" stroke="#333" strokeWidth="1.200" /><circle cx="8.500" cy="11.500" r="1.500" fill="#222" /></svg>
          </TrayIcon>
          <TrayIcon $mt={16} $ml={7}>
            <svg width="17" height="14" viewBox="0 0 17 14"><path d="M.6 4.800h2.700L7 1.300v11.400L3.300 9.200H.6zM9.300 5q1.500 2 0 4M11.500 3.300q3 3.700 0 7.400M13.700 1.700q4.300 5.300 0 10.600" fill="none" stroke="#222" strokeWidth="1.100" /></svg>
          </TrayIcon>
          <TrayIcon $mt={15} $ml={7}>
            <svg width="17" height="14" viewBox="0 0 17 14"><path d="M6 4h7.500q1.500 0 1.500 1.500v5q0 1.500-1.500 1.500H3.500Q2 12 2 10.500V8" fill="none" stroke="#111" strokeWidth="1.200" /><path d="M6.500 5.500h7v5h-10V8.500z" fill="#111" /><path d="M15.200 6.500h1.500v3h-1.500zM3 0L0 5h2l-1 4 4.500-5.500H3.500L5 0z" fill="#111" /></svg>
          </TrayIcon>
          <Slot $w={79}><Stack $pt={7} $align="right"><Text $ls={-0.3} $c="#222">5:19 PM</Text><Text $ls={-0.05} $c="#222">2023-06-18</Text></Stack></Slot>
          <Count>2</Count>
        </Tray>
      </TaskBar>

      {HIGHLIGHTS.map(([x, w, c, y = 275, h = 251]) => (
        <Highlight key={x} $x={x} $y={y} $w={w} $h={h} $c={c} />
      ))}
      {NOTES.map(([x, y, w, h, c, text, pt]) => (
        <Note key={x} $x={x} $y={y} $w={w} $h={h} $c={c} $pt={pt + 1} $ls={c === C ? 0.2 : 0.45}>{text}</Note>
      ))}
      <StartNote>start signal</StartNote>
    </Desktop>
  );
}
